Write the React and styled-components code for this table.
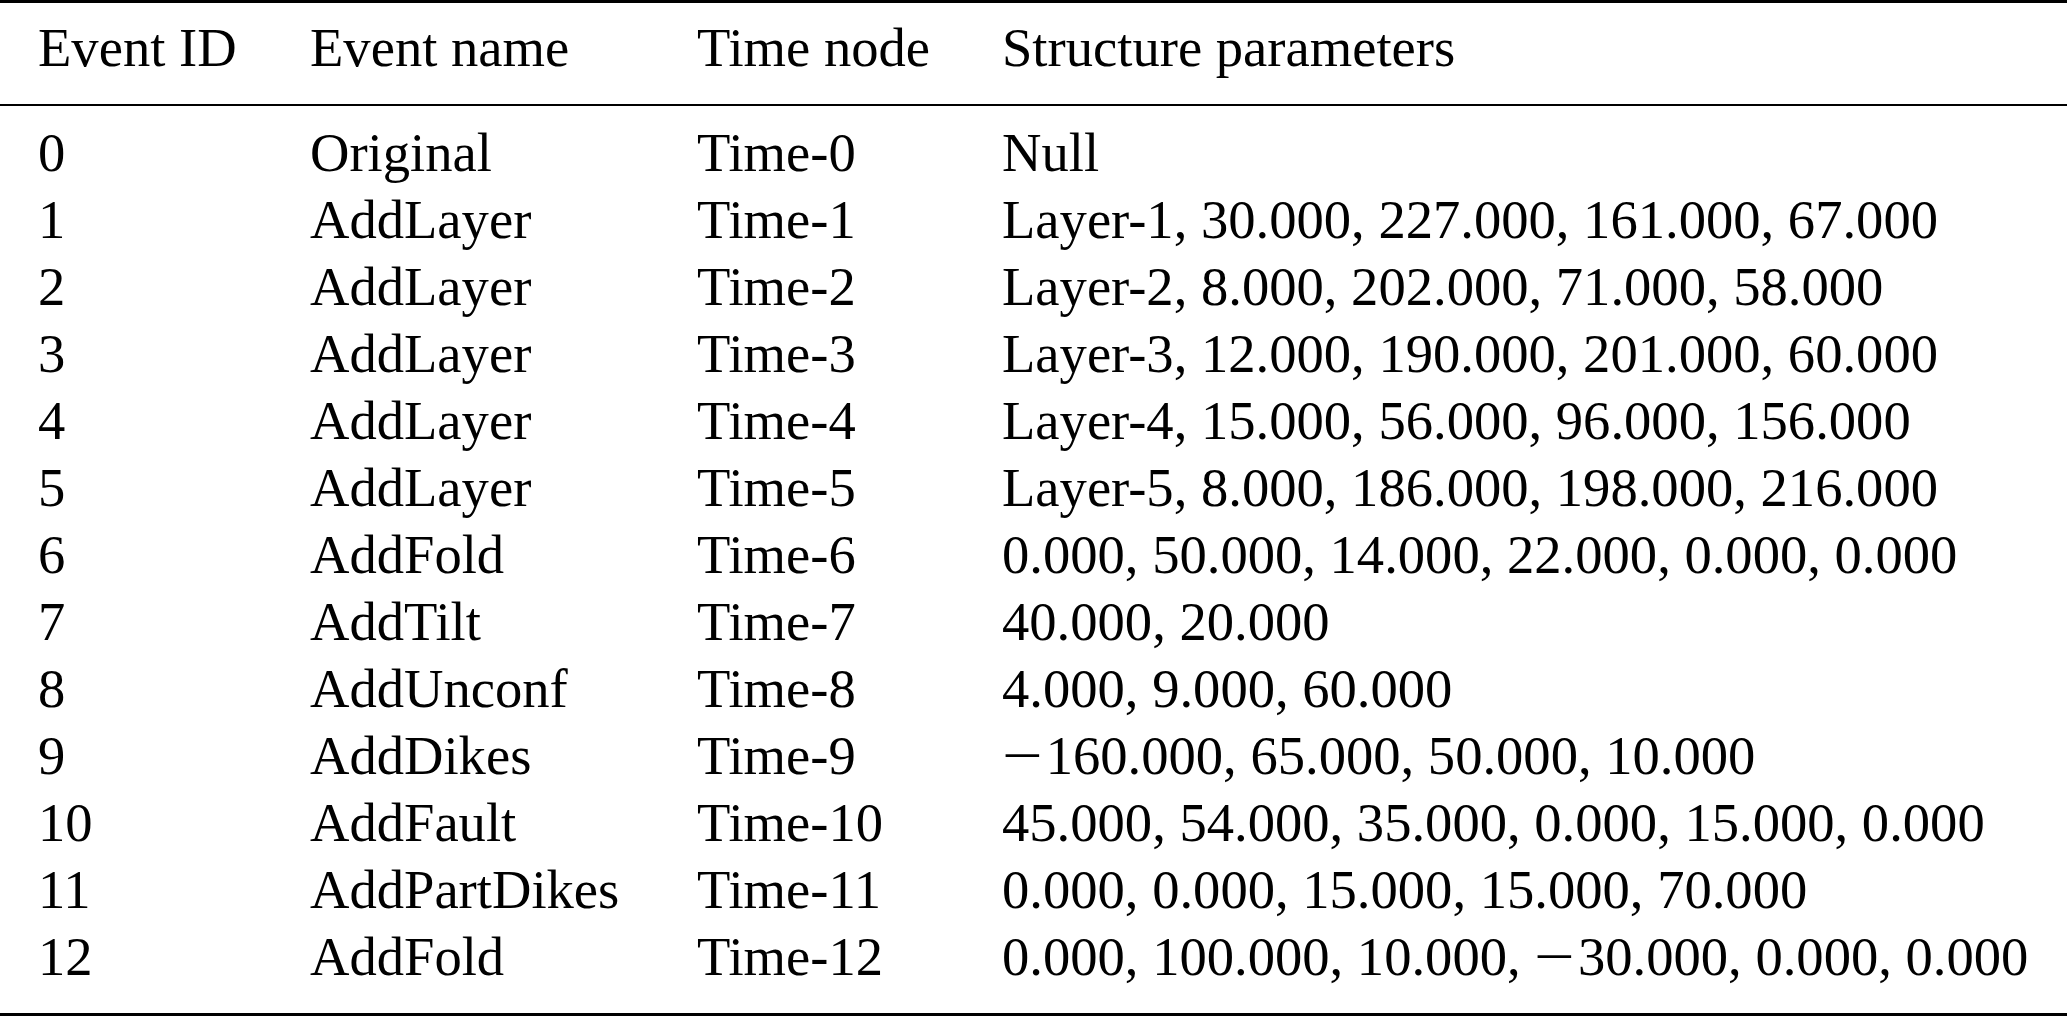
import React from "react";
import styled, { createGlobalStyle } from "styled-components";

const Global = createGlobalStyle`
  html, body { margin: 0; padding: 0; background: #ffffff; }
  body { font-family: "Liberation Serif", "Times New Roman", serif; color: #000; }
`;

const Table = styled.div`
  width: 2067px;
  border-top: 3px solid #000;
  border-bottom: 3px solid #000;
  font-family: "Liberation Serif", "Times New Roman", serif;
  font-size: 54.6px;
  line-height: 67px;
  color: #000;
`;

const Head = styled.div`
  padding: 11px 0 23px;
  border-bottom: 2px solid #000;
`;

const Body = styled.div`
  padding: 13px 0 23px;
`;

const Row = styled.div`
  display: grid;
  grid-template-columns: 272px 387px 305px 1fr;
  padding-left: 38px;
  height: 67px;
  white-space: nowrap;
`;

const Cell = styled.div`
  text-align: left;
`;

const Minus = styled.span`
  display: inline-block;
  width: 0.8em;
  text-align: left;
  transform: scaleX(1.32);
  transform-origin: left center;
`;

const header = ["Event ID", "Event name", "Time node", "Structure parameters"];

const rows = [
  ["0", "Original", "Time-0", "Null"],
  ["1", "AddLayer", "Time-1", "Layer-1, 30.000, 227.000, 161.000, 67.000"],
  ["2", "AddLayer", "Time-2", "Layer-2, 8.000, 202.000, 71.000, 58.000"],
  ["3", "AddLayer", "Time-3", "Layer-3, 12.000, 190.000, 201.000, 60.000"],
  ["4", "AddLayer", "Time-4", "Layer-4, 15.000, 56.000, 96.000, 156.000"],
  ["5", "AddLayer", "Time-5", "Layer-5, 8.000, 186.000, 198.000, 216.000"],
  ["6", "AddFold", "Time-6", "0.000, 50.000, 14.000, 22.000, 0.000, 0.000"],
  ["7", "AddTilt", "Time-7", "40.000, 20.000"],
  ["8", "AddUnconf", "Time-8", "4.000, 9.000, 60.000"],
  ["9", "AddDikes", "Time-9", "\u2212160.000, 65.000, 50.000, 10.000"],
  ["10", "AddFault", "Time-10", "45.000, 54.000, 35.000, 0.000, 15.000, 0.000"],
  ["11", "AddPartDikes", "Time-11", "0.000, 0.000, 15.000, 15.000, 70.000"],
  ["12", "AddFold", "Time-12", "0.000, 100.000, 10.000, \u221230.000, 0.000, 0.000"],
];

function renderText(text) {
  const parts = text.split("\u2212");
  return parts.map((p, i) => (
    <React.Fragment key={i}>
      {i > 0 && <Minus>{"\u2212"}</Minus>}
      {p}
    </React.Fragment>
  ));
}

export default function App() {
  return (
    <>
      <Global />
      <Table>
        <Head>
          <Row>
            {header.map((h) => (
              <Cell key={h}>{h}</Cell>
            ))}
          </Row>
        </Head>
        <Body>
          {rows.map((r) => (
            <Row key={r[0]}>
              {r.map((c, i) => (
                <Cell key={i}>{renderText(c)}</Cell>
              ))}
            </Row>
          ))}
        </Body>
      </Table>
    </>
  );
}
